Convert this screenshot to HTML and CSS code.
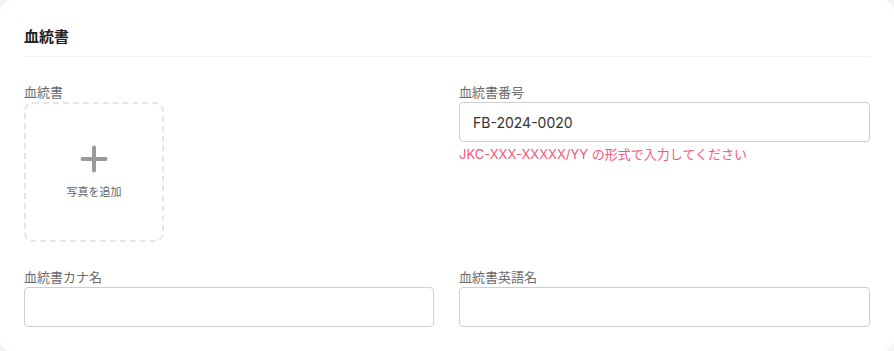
FILE: index.html
```html
<!DOCTYPE html>
<html lang="ja">
<head>
<meta charset="utf-8">
<title>血統書</title>
<link rel="stylesheet" href="styles.css">
</head>
<body>
<section class="card">
  <h2 class="card-title">血統書</h2>
  <div class="form-grid">
    <div class="field">
      <label class="field-label">血統書</label>
      <button class="upload" type="button">
        <svg class="upload-icon" width="28" height="28" viewBox="0 0 28 28" aria-hidden="true">
          <path d="M14 2.5v23M2.5 14h23" stroke="#9a9a9a" stroke-width="4" stroke-linecap="round" fill="none"/>
        </svg>
        <span class="upload-text">写真を追加</span>
      </button>
    </div>
    <div class="field">
      <label class="field-label">血統書番号</label>
      <input class="text-input" type="text" value="FB-2024-0020">
      <p class="error">JKC-XXX-XXXXX/YY の形式で入力してください</p>
    </div>
    <div class="field">
      <label class="field-label">血統書カナ名</label>
      <input class="text-input" type="text" value="">
    </div>
    <div class="field">
      <label class="field-label">血統書英語名</label>
      <input class="text-input" type="text" value="">
    </div>
  </div>
</section>
</body>
</html>
```

FILE: styles.css
```css
* { box-sizing: border-box; }
html, body {
  margin: 0;
  padding: 0;
  background: #f4f4f4;
  font-family: Inter, "Noto Sans CJK JP", "Noto Sans", sans-serif;
}
.card {
  width: 894px;
  height: 351px;
  background: #ffffff;
  border-radius: 12px;
  padding: 26px 24px 24px 24px;
}
.card-title {
  margin: 0;
  font-size: 15px;
  line-height: 22px;
  font-weight: 700;
  color: #222;
  padding-bottom: 8px;
  border-bottom: 1px solid #f0f0f0;
}
.form-grid {
  margin-top: 27px;
  display: grid;
  grid-template-columns: 410px 411px;
  column-gap: 25px;
  row-gap: 27px;
}
.field {
  display: flex;
  flex-direction: column;
  align-items: stretch;
}
.field-label {
  font-size: 13px;
  line-height: 16px;
  color: #6b6b6b;
  margin-bottom: 2px;
}
.upload {
  width: 140px;
  height: 140px;
  border: 2px dashed #e6e6e6;
  border-radius: 9px;
  background: #fff;
  display: flex;
  flex-direction: column;
  align-items: center;
  justify-content: center;
  gap: 12px;
  padding: 0;
  font-family: inherit;
  cursor: pointer;
}
.upload-icon { display: block; }
.upload-text {
  font-size: 11px;
  line-height: 14px;
  color: #666;
}
.text-input {
  height: 40px;
  width: 100%;
  border: 1px solid #cfcfcf;
  border-radius: 4px;
  padding: 0 13px;
  font-family: inherit;
  font-size: 14px;
  color: #333;
  background: #fff;
  outline: none;
}
.error {
  margin: 3px 0 0 0;
  font-size: 13px;
  line-height: 18px;
  color: #f2587c;
}
```
